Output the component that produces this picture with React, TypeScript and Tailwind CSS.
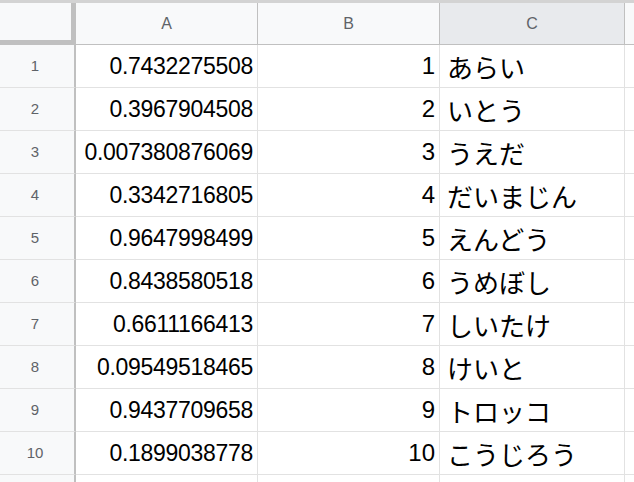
import React from "react";

const rows: [string, string, string][] = [
  ["0.7432275508", "1", "あらい"],
  ["0.3967904508", "2", "いとう"],
  ["0.007380876069", "3", "うえだ"],
  ["0.3342716805", "4", "だいまじん"],
  ["0.9647998499", "5", "えんどう"],
  ["0.8438580518", "6", "うめぼし"],
  ["0.6611166413", "7", "しいたけ"],
  ["0.09549518465", "8", "けいと"],
  ["0.9437709658", "9", "トロッコ"],
  ["0.1899038778", "10", "こうじろう"],
];

export default function App() {
  return (
    <div
      className="w-[634px] h-[482px] overflow-hidden bg-white"
      style={{ fontFamily: '"Liberation Sans", Arial, "Noto Sans CJK JP", sans-serif' }}
    >
      <div className="h-[3px] bg-[#d3d3d3]" />
      <div className="grid grid-cols-[76px_182px_182px_185px_40px] auto-rows-[43px] grid-rows-[42px]">
        <div className="bg-[#f8f9fa] border-r-[5px] border-b-[5px] border-[#c0c0c0]" />
        <div className="bg-[#f8f9fa] border-r border-b border-[#c0c0c0] flex items-center justify-center text-[16px] text-[#5f6368]">A</div>
        <div className="bg-[#f8f9fa] border-r border-b border-[#c0c0c0] flex items-center justify-center text-[16px] text-[#5f6368]">B</div>
        <div className="bg-[#e8eaed] border-r border-b border-[#c0c0c0] flex items-center justify-center text-[16px] text-[#5f6368]">C</div>
        <div className="bg-[#f8f9fa] border-b border-[#c0c0c0]" />
        {rows.map(([a, b, c], i) => (
          <React.Fragment key={i}>
            <div className="bg-[#f8f9fa] border-r-2 border-b border-[#c0c0c0] border-b-[#e2e2e2] flex items-center justify-center pr-1 text-[15px] text-[#5f6368]">{i + 1}</div>
            <div className="border-r border-b border-[#e2e2e2] flex items-center justify-end pr-1 text-[23px] tracking-[-0.3px] text-black whitespace-nowrap">{a}</div>
            <div className="border-r border-b border-[#e2e2e2] flex items-center justify-end pr-1 text-[24px] text-black">{b}</div>
            <div className="border-r border-b border-[#e2e2e2] flex items-center pl-[7px] text-[26px] text-black whitespace-nowrap" style={{ fontFamily: '"Noto Sans CJK JP", sans-serif' }}>{c}</div>
            <div className="border-b border-[#e2e2e2]" />
          </React.Fragment>
        ))}
        <div className="bg-[#f8f9fa] border-r-2 border-[#c0c0c0]" />
        <div className="border-r border-[#e2e2e2]" />
        <div className="border-r border-[#e2e2e2]" />
        <div className="border-r border-[#e2e2e2]" />
        <div />
      </div>
    </div>
  );
}
